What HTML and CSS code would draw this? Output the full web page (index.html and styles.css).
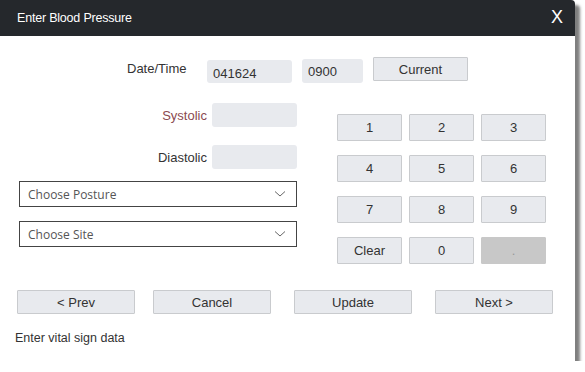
FILE: index.html
```html
<!DOCTYPE html>
<html lang="en">
<head>
    <meta charset="UTF-8">
    <meta name="viewport" content="width=device-width, initial-scale=1.0">
    <title>Enter Blood Pressure</title>
    <link rel="stylesheet" href="styles.css">
</head>
<body>
    <div class="dialog">
        <div class="dialog-header">
            <span class="dialog-title">Enter Blood Pressure</span>
            <span class="dialog-close">X</span>
        </div>

        <!-- Fecha y hora -->
        <div class="date-row">
            <label class="date-label">Date/Time</label>
            <input type="text" class="field date-field" value="041624">
            <input type="text" class="field time-field" value="0900">
            <button class="btn current-btn">Current</button>
        </div>

        <div class="main">
            <div class="left-col">
                <div class="value-row">
                    <label class="systolic">Systolic</label>
                    <input type="text" class="field value-field">
                </div>
                <div class="value-row diastolic-row">
                    <label>Diastolic</label>
                    <input type="text" class="field value-field">
                </div>
                <div class="select-box posture">
                    <span>Choose Posture</span>
                    <svg width="12" height="8" viewBox="0 0 12 8"><path d="M1 1.5 L6 6 L11 1.5" fill="none" stroke="#666" stroke-width="1"/></svg>
                </div>
                <div class="select-box site">
                    <span>Choose Site</span>
                    <svg width="12" height="8" viewBox="0 0 12 8"><path d="M1 1.5 L6 6 L11 1.5" fill="none" stroke="#666" stroke-width="1"/></svg>
                </div>
            </div>

            <!-- Teclado numérico -->
            <div class="keypad">
                <button class="btn key">1</button>
                <button class="btn key">2</button>
                <button class="btn key">3</button>
                <button class="btn key">4</button>
                <button class="btn key">5</button>
                <button class="btn key">6</button>
                <button class="btn key">7</button>
                <button class="btn key">8</button>
                <button class="btn key">9</button>
                <button class="btn key">Clear</button>
                <button class="btn key">0</button>
                <button class="btn key key-disabled">.</button>
            </div>
        </div>

        <div class="nav-row">
            <button class="btn nav-btn">&lt; Prev</button>
            <button class="btn nav-btn cancel-btn">Cancel</button>
            <button class="btn nav-btn update-btn">Update</button>
            <button class="btn nav-btn next-btn">Next &gt;</button>
        </div>

        <div class="status">Enter vital sign data</div>
    </div>
</body>
</html>
```

FILE: styles.css
```css
body {
    margin: 0;
    padding: 0;
    background: #fff;
    font-family: "Liberation Sans", Arial, sans-serif;
    color: #333;
}
.dialog {
    width: 575px;
    height: 361px;
    background: #fff;
    border-top-right-radius: 4px;
    box-shadow: 5px 5px 3px rgba(0,0,0,0.5);
    overflow: hidden;
}
.dialog-header {
    height: 36px;
    background: #25282c;
    display: flex;
    align-items: center;
    justify-content: space-between;
    padding: 0 12px 0 17px;
}
.dialog-title {
    color: #fff;
    font-size: 12.5px;
    letter-spacing: -0.2px;
}
.dialog-close {
    color: #fff;
    font-size: 18px;
    margin-top: -2px;
}
.field {
    box-sizing: border-box;
    border: none;
    border-radius: 3px;
    background: #e8eaee;
    font-family: "Liberation Sans", Arial, sans-serif;
    font-size: 13px;
    color: #333;
    padding: 0 6px;
    outline: none;
}
.btn {
    box-sizing: border-box;
    background: #e8eaee;
    border: 1px solid #c9cbce;
    border-radius: 1px;
    font-family: "Liberation Sans", Arial, sans-serif;
    font-size: 13px;
    color: #333;
    padding: 0;
}
.date-row {
    display: flex;
    align-items: flex-start;
    padding-left: 127px;
    margin-top: 21px;
}
.date-label {
    width: 80px;
    font-size: 13px;
    margin-top: 4px;
}
.date-field {
    width: 85px;
    height: 23px;
    margin-top: 3px;
    padding-top: 4px;
}
.time-field {
    width: 61px;
    height: 24px;
    margin-left: 10px;
    margin-top: 2px;
}
.current-btn {
    width: 95px;
    height: 24px;
    margin-left: 10px;
}
.main {
    display: flex;
    align-items: flex-start;
    padding-left: 19px;
    margin-top: 20px;
}
.left-col {
    width: 278px;
}
.value-row {
    display: flex;
    justify-content: flex-end;
    align-items: center;
    gap: 5px;
    font-size: 13px;
}
.systolic {
    color: #8b4a50;
}
.diastolic-row {
    margin-top: 18px;
}
.value-field {
    width: 85px;
    height: 24px;
}
.select-box {
    box-sizing: border-box;
    height: 26px;
    border: 1px solid #444;
    display: flex;
    align-items: center;
    justify-content: space-between;
    padding: 0 10px 0 8px;
    font-family: "Open Sans", sans-serif;
    font-size: 12px;
    color: #555;
}
.posture {
    margin-top: 12px;
}
.site {
    margin-top: 14px;
}
.keypad {
    display: grid;
    grid-template-columns: repeat(3, 65px);
    grid-auto-rows: 27px;
    column-gap: 7px;
    row-gap: 14px;
    margin-left: 40px;
    margin-top: 11px;
}
.key-disabled {
    background: #c8c8c8;
    border-color: #c8c8c8;
    color: #999;
}
.nav-row {
    display: flex;
    padding-left: 17px;
    margin-top: 26px;
}
.nav-btn {
    width: 118px;
    height: 24px;
}
.cancel-btn {
    margin-left: 18px;
}
.update-btn {
    margin-left: 23px;
}
.next-btn {
    margin-left: 23px;
}
.status {
    font-size: 12.5px;
    margin: 17px 0 0 15px;
}
```
